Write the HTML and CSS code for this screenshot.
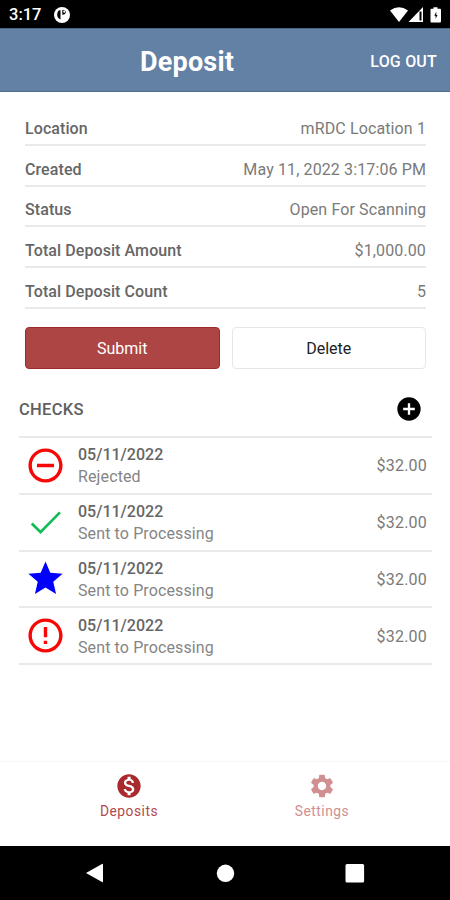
FILE: index.html
```html
<!DOCTYPE html>
<html lang="en">
<head>
<meta charset="utf-8">
<title>Deposit</title>
<link rel="stylesheet" href="styles.css">
</head>
<body>
<div class="status-bar">
  <span class="clock">3:17</span>
  <svg class="app-badge" viewBox="0 0 16 16"><circle cx="8" cy="8" r="8" fill="#fff"/><path d="M5 3.200h1.500V12.500Q3 10.800 3.200 7.500 3.300 4.600 5 3.200z" fill="#000"/><path d="M8.300 3v4.800q3.400-.2 3.700-3.400Q10.500 3 8.300 3z" fill="#000"/><circle cx="10.300" cy="4.700" r="1.100" fill="#fff"/></svg>
  <svg class="signals" viewBox="0 0 52 16"><path d="M0 3.500Q9-3 18 3.500L9 15z" fill="#fff"/><path d="M33 0v15H18.500z" fill="#fff"/><path d="M29.500 4.500h2v9h-2z" fill="#000"/><path d="M43.500.2h4v1.500H50q1 0 1 1V14.500q0 1-1 1h-8.500q-1 0-1-1V2.700q0-1 1-1h2z" fill="#fff"/><path d="M46.300 4.800 44.300 8.800h1.300v3L47.500 8h-1.200z" fill="#000"/></svg>
</div>
<header class="app-bar">
  <h1>Deposit</h1>
  <button class="logout">LOG OUT</button>
</header>
<main>
  <dl class="details">
    <div><dt>Location</dt><dd>mRDC Location 1</dd></div>
    <div><dt>Created</dt><dd>May 11, 2022 3:17:06 PM</dd></div>
    <div><dt>Status</dt><dd>Open For Scanning</dd></div>
    <div><dt>Total Deposit Amount</dt><dd>$1,000.00</dd></div>
    <div><dt>Total Deposit Count</dt><dd>5</dd></div>
  </dl>
  <div class="actions">
    <button class="submit">Submit</button>
    <button class="delete">Delete</button>
  </div>
  <div class="section-head">
    <h2>CHECKS</h2>
    <svg viewBox="0 0 24 24"><path d="M12 2a10 10 0 1 0 0 20 10 10 0 0 0 0-20zm5 11h-4v4h-2v-4H7v-2h4V7h2v4h4z"/></svg>
  </div>
  <ul class="checks">
    <li>
      <svg class="red" viewBox="0 0 24 24"><path d="M7 11v2h10v-2H7zm5-9C6.480 2 2 6.480 2 12s4.480 10 10 10 10-4.480 10-10S17.520 2 12 2zm0 18c-4.410 0-8-3.590-8-8s3.590-8 8-8 8 3.590 8 8-3.590 8-8 8z"/></svg>
      <div class="info"><strong>05/11/2022</strong><span>Rejected</span></div><span class="amount">$32.00</span>
    </li>
    <li>
      <svg class="green" viewBox="0 0 24 24"><path d="M9.100 16.600 4.500 12l-1.100 1.100L9.100 18.800 21 6.600l-1.100-1.100z"/></svg>
      <div class="info"><strong>05/11/2022</strong><span>Sent to Processing</span></div><span class="amount">$32.00</span>
    </li>
    <li>
      <svg class="blue" viewBox="0 0 24 24"><path d="M12 17.270 18.180 21l-1.640-7.030L22 9.240l-7.190-.610L12 2 9.190 8.630 2 9.240l5.460 4.730L5.820 21z"/></svg>
      <div class="info"><strong>05/11/2022</strong><span>Sent to Processing</span></div><span class="amount">$32.00</span>
    </li>
    <li>
      <svg class="red" viewBox="0 0 24 24"><path d="M11 15h2v2h-2zm0-8h2v6h-2zm.990-5C6.470 2 2 6.480 2 12s4.470 10 9.990 10C17.520 22 22 17.520 22 12S17.520 2 11.990 2zM12 20c-4.420 0-8-3.580-8-8s3.580-8 8-8 8 3.580 8 8-3.580 8-8 8z"/></svg>
      <div class="info"><strong>05/11/2022</strong><span>Sent to Processing</span></div><span class="amount">$32.00</span>
    </li>
  </ul>
</main>
<nav class="tabs">
  <a class="tab active">
    <svg viewBox="0 0 24 24"><path d="M12 2C6.480 2 2 6.480 2 12s4.480 10 10 10 10-4.480 10-10S17.520 2 12 2zm1.410 16.090V20h-2.670v-1.930c-1.710-.360-3.160-1.460-3.270-3.400h1.960c.1 1.050.820 1.870 2.650 1.870 1.960 0 2.400-.980 2.400-1.590 0-.830-.440-1.610-2.670-2.140-2.480-.6-4.180-1.620-4.180-3.670 0-1.720 1.390-2.840 3.110-3.210V4h2.670v1.950c1.860.450 2.790 1.860 2.850 3.390H14.300c-.050-1.110-.640-1.870-2.220-1.870-1.500 0-2.400.680-2.400 1.640 0 .840.650 1.390 2.670 1.910s4.180 1.390 4.180 3.910c-.010 1.830-1.380 2.830-3.120 3.160z"/></svg>
    <span>Deposits</span>
  </a>
  <a class="tab">
    <svg viewBox="0 0 24 24"><path d="M19.140 12.940c.040-.3.060-.610.060-.940 0-.320-.020-.640-.070-.940l2.030-1.580c.180-.140.230-.410.120-.610l-1.920-3.320c-.120-.220-.370-.290-.590-.220l-2.390.960c-.5-.380-1.030-.7-1.620-.940l-.360-2.540c-.040-.240-.240-.410-.480-.410h-3.840c-.240 0-.430.170-.470.410l-.360 2.540c-.590.240-1.130.570-1.620.940l-2.390-.960c-.220-.080-.470 0-.590.220L2.740 8.870c-.120.210-.080.470.120.610l2.030 1.580c-.050.3-.090.630-.090.940s.020.640.070.940l-2.030 1.580c-.180.140-.230.410-.120.610l1.920 3.320c.120.220.370.290.590.220l2.390-.960c.5.380 1.030.7 1.620.940l.360 2.540c.050.240.240.410.480.410h3.840c.240 0 .440-.170.470-.410l.360-2.540c.590-.240 1.130-.560 1.620-.940l2.390.960c.220.080.470 0 .590-.220l1.920-3.320c.120-.220.070-.470-.120-.610zM12 15.600c-1.980 0-3.600-1.620-3.600-3.600s1.620-3.600 3.600-3.600 3.600 1.620 3.600 3.600-1.620 3.600-3.600 3.600z"/></svg>
    <span>Settings</span>
  </a>
</nav>
<div class="system-nav">
  <svg viewBox="0 0 24 24"><path d="M4 12 20 3q1-.500 1 .500v17q0 1-1 .500z"/></svg>
  <svg viewBox="0 0 24 24"><circle cx="12.500" cy="12.300" r="8.700"/></svg>
  <svg viewBox="0 0 24 24"><rect x="2.500" y="2.900" width="18.600" height="18.600" rx="1.500"/></svg>
</div>
</body>
</html>
```
FILE: styles.css
```css
* { box-sizing: border-box; }
body {
  margin: 0;
  height: 900px;
  display: flex;
  flex-direction: column;
  background: #fff;
  color: #7a7a7a;
  font: 16px/20px Roboto, "Liberation Sans", sans-serif;
  overflow: hidden;
}
h1, h2, dl, dd, ul { margin: 0; padding: 0; }
button { font: inherit; padding: 0; border: 0; background: none; }
svg { display: block; flex: none; fill: currentColor; }

.status-bar {
  height: 28px;
  display: flex;
  align-items: center;
  padding: 1px 8px 0 9px;
  background: #000;
  color: #fff;
}
.clock { width: 45px; font-size: 16.500px; font-weight: 500; }
.app-badge { width: 16px; height: 16px; }
.signals { width: 52px; height: 16px; margin-left: auto; }

.app-bar {
  height: 64px;
  display: grid;
  grid-template-columns: 140px 1fr auto;
  align-items: center;
  padding: 3px 13px 0 0;
  background: #6380a5;
  border-top: 1px solid #4d6683;
  border-bottom: 1px solid #506e91;
  color: #fff;
}
.app-bar h1 { grid-column: 2; font-size: 27px; line-height: 32px; font-weight: 700; letter-spacing: .2px; }
.logout { color: #fff; font-weight: 500; letter-spacing: .2px; }

main { flex: 1; padding: 13px 18px 0 19px; }
.details { padding: 0 6px; }
.details div {
  height: 40.800px;
  display: flex;
  align-items: center;
  justify-content: space-between;
  padding-top: 9px;
  border-bottom: 2px solid #e9e9e9;
}
.details dt { font-weight: 500; color: #666; letter-spacing: .08px; }
.details dd { letter-spacing: .12px; }

.actions {
  display: grid;
  grid-template-columns: 1fr 1fr;
  gap: 12px;
  padding: 18px 6px 0;
}
.actions button { height: 42px; padding-top: 2px; border-radius: 4px; }
.submit { background: #ad4545; border: 1px solid #9c2c2f; color: #fff; }
.actions .delete { border: 1.500px solid #e6e6e6; color: #222; }

.section-head {
  height: 67px;
  display: flex;
  align-items: center;
  justify-content: space-between;
  padding: 13px 9px 0 0;
}
.section-head h2 { padding-top: 2px; font-size: 16.500px; font-weight: 500; color: #606060; letter-spacing: .3px; }
.section-head svg { width: 28px; height: 28px; color: #000; }

.checks { list-style: none; border-top: 2px solid #e9e9e9; }
.checks li {
  height: 56.800px;
  display: flex;
  align-items: center;
  padding: 0 5px 0 6px;
  border-bottom: 2px solid #e9e9e9;
}
.checks svg { width: 41px; height: 41px; }
.red { color: #f90606; }
.green { color: #0fbd55; }
.blue { color: #00f; }
.info { display: flex; flex-direction: column; margin-left: 12px; padding-top: 2px; line-height: 22px; }
.info strong { font-weight: 500; color: #666; }
.info span { color: #858585; letter-spacing: .12px; }
.amount { margin-left: auto; padding-top: 2px; letter-spacing: .2px; }

.tabs {
  height: 85px;
  display: grid;
  grid-template-columns: 1fr 1fr;
  padding: 0 32px;
  border-top: 1px solid #f7f7f7;
}
.tab {
  display: flex;
  flex-direction: column;
  align-items: center;
  padding-top: 10px;
  color: #d08f91;
  font-size: 13.800px;
  letter-spacing: .5px;
}
.tab.active { color: #b14a4e; }
.tab svg { width: 28px; height: 28px; }
.tab.active svg { color: #a9292c; }
.tab span { margin: 1px 0 0 1px; }

.system-nav {
  height: 54px;
  display: flex;
  align-items: center;
  justify-content: space-between;
  padding: 0 83px 0 82px;
  background: #000;
  color: #fff;
}
.system-nav svg { width: 24px; height: 24px; }
```
